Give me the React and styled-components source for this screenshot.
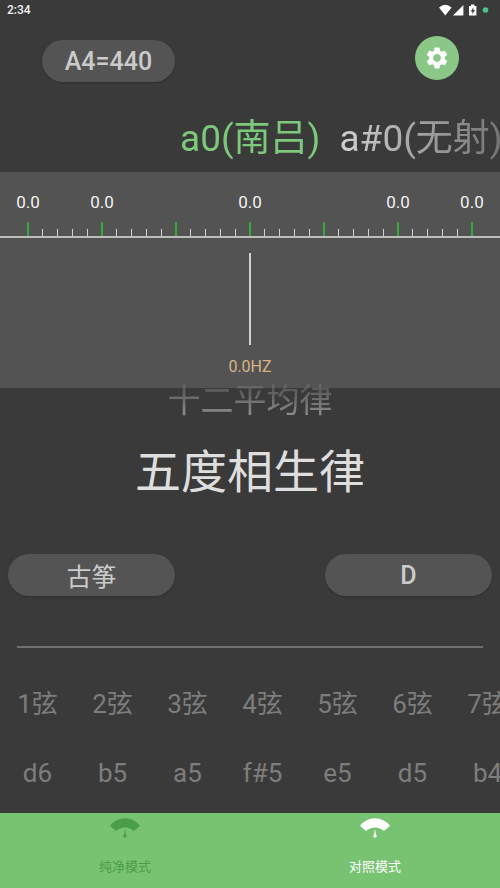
import { useState } from "react";
import styled, { createGlobalStyle } from "styled-components";
import { MdSettings } from "react-icons/md";

const GlobalStyle = createGlobalStyle`
  * {
    box-sizing: border-box;
  }
  body {
    margin: 0;
    background: #3a3a3a;
    font-family: Roboto, "Noto Sans CJK SC", sans-serif;
  }
  button {
    padding: 0;
    border: none;
    background: none;
    font-family: inherit;
    cursor: pointer;
  }
`;

const Page = styled.div`
  display: flex;
  flex-direction: column;
  min-height: 100vh;
  overflow: hidden;
  color: #d0d0d0;
`;

const StatusBar = styled.div`
  display: flex;
  justify-content: space-between;
  align-items: center;
  height: 20px;
  padding: 0 11px 0 7px;
  font-size: 12px;
  font-weight: 500;
  color: #f0f0f0;
`;

const Header = styled.header`
  display: flex;
  justify-content: space-between;
  align-items: flex-start;
  padding: 16px 41px 0 42px;
`;

const Pill = styled.button`
  height: 42px;
  border-radius: 21px;
  background: #545454;
  font-size: 25px;
  font-weight: ${(props) => (props.$regular ? 400 : 500)};
  color: #cbcbcb;
  box-shadow: 0 1px 2px rgba(0, 0, 0, 0.2);
`;

const PitchButton = styled(Pill)`
  width: 133px;
  margin-top: 4px;
`;

const SettingButton = styled.button`
  display: flex;
  justify-content: center;
  align-items: center;
  width: 44px;
  height: 44px;
  border-radius: 50%;
  background: #8bc888;
  color: white;
`;

const NoteList = styled.div`
  display: flex;
  gap: 19px;
  height: 92px;
  padding: 34px 0 0 180px;
  margin-bottom: -1px;
  margin-top: -1px;
  overflow: hidden;
  mask-image: linear-gradient(to right, black 68%, rgba(0, 0, 0, 0.4));
`;

const Note = styled.button`
  flex: none;
  height: 48px;
  font-size: 37px;
  line-height: 48px;
  white-space: nowrap;
  color: ${(props) => (props.$active ? "#7cc97b" : "#d0d0d0")};
`;

const Gauge = styled.section`
  display: flex;
  flex-direction: column;
  align-items: center;
  height: 216px;
  background: #535353;
`;

const Scale = styled.div`
  display: flex;
  justify-content: space-between;
  align-items: flex-end;
  width: 100%;
  height: 66px;
  padding: 0 27px;
  border-bottom: 2px solid #bdbdbd;
`;

const TickBox = styled.div`
  display: flex;
  flex-direction: column;
  align-items: center;
  justify-content: flex-end;
  width: 2px;
`;

const TickLabel = styled.span`
  margin-bottom: 10px;
  font-size: 17px;
  line-height: 20px;
  color: #f2f2f2;
`;

const Tick = styled.i`
  width: ${(props) => (props.$major ? 2 : 1)}px;
  height: ${(props) => (props.$major ? 14 : 7)}px;
  background: ${(props) => (props.$major ? "#36ab3b" : "#d0d0d0")};
`;

const Needle = styled.div`
  width: 2px;
  height: 92px;
  margin-top: 15px;
  background: #d2d2d2;
`;

const Frequency = styled.div`
  margin-top: 12px;
  font-size: 16px;
  line-height: 20px;
  color: #d5b383;
`;

const Picker = styled.div`
  position: relative;
  display: flex;
  flex-direction: column;
  align-items: center;
  gap: 17px;
  margin-top: -11px;
`;

const Temperament = styled.button`
  font-size: ${(props) => (props.$active ? 46 : 33)}px;
  line-height: ${(props) => (props.$active ? 60 : 48)}px;
  color: ${(props) => (props.$active ? "#dedede" : "#919191")};
  mask-image: ${(props) =>
    props.$active ? "none" : "linear-gradient(rgba(0, 0, 0, 0.1), black 85%)"};
`;

const Selects = styled.div`
  display: flex;
  gap: 150px;
  padding: 52px 8px 0;
`;

const WidePill = styled(Pill)`
  flex: 1;
`;

const Divider = styled.hr`
  width: calc(100% - 34px);
  height: 2px;
  margin: 50px 17px 0;
  border: none;
  background: #6f6f6f;
`;

const Strings = styled.div`
  display: grid;
  grid-auto-flow: column;
  grid-auto-columns: 75px;
  padding: 36px 0 20px;
  overflow: hidden;
`;

const StringItem = styled.div`
  display: flex;
  flex-direction: column;
  align-items: center;
  gap: 29px;
  font-size: 26px;
  line-height: 40px;
  white-space: nowrap;
  color: #7d7d7d;
`;

const TabBar = styled.nav`
  display: flex;
  height: 75px;
  margin-top: auto;
  background: #78c371;
`;

const Tab = styled.button`
  display: flex;
  flex: 1;
  flex-direction: column;
  align-items: center;
  gap: 17px;
  padding-top: 5px;
  font-size: 13px;
  line-height: 20px;
  color: ${(props) => (props.$active ? "white" : "#4c9d49")};
`;

const StatusIcons = () => (
  <svg width="50" height="14" viewBox="0 0 50 14" aria-hidden="true">
    <path d="M0 4.4Q6.3 -.8 12.6 4.4L6.3 12.4Z" fill="white" />
    <path d="M24.4 2V12.4H14Z" fill="white" />
    <path
      d="M30 3h2V1.4h3.4V3h2v9.6H30ZM34.3 4.4l-2.6 4h1.7v2.8l2.5-4.1h-1.6Z"
      fill="white"
      fillRule="evenodd"
    />
    <circle cx="46.5" cy="7" r="2.8" fill="#4cc38a" />
  </svg>
);

const DialIcon = () => (
  <svg width="30" height="22" viewBox="0 0 30 22" aria-hidden="true">
    <path
      d="M0 7.8Q6 .2 15 .2T30 7.8L24 13Q20 9.4 15 9.4T6 13Z"
      fill="currentColor"
    />
    <path d="M14.7 12h.6l.5 5h-1.6Z" fill="currentColor" />
    <circle cx="15" cy="18" r="1.8" fill="currentColor" />
  </svg>
);

const notes = ["a0(南吕)", "a#0(无射)"];
const labelTicks = [0, 5, 15, 25, 30];
const strings = ["d6", "b5", "a5", "f#5", "e5", "d5", "b4"];

const App = () => {
  const [tab, setTab] = useState("对照模式");

  return (
    <Page>
      <GlobalStyle />
      <StatusBar>
        <span>2:34</span>
        <StatusIcons />
      </StatusBar>

      <Header>
        <PitchButton>A4=440</PitchButton>
        <SettingButton aria-label="设置">
          <MdSettings size={26} />
        </SettingButton>
      </Header>

      <NoteList>
        {notes.map((note, i) => (
          <Note key={note} $active={i === 0}>
            {note}
          </Note>
        ))}
      </NoteList>

      <Gauge>
        <Scale>
          {Array.from({ length: 31 }, (_, i) => (
            <TickBox key={i}>
              {labelTicks.includes(i) && <TickLabel>0.0</TickLabel>}
              <Tick $major={i % 5 === 0} />
            </TickBox>
          ))}
        </Scale>
        <Needle />
        <Frequency>0.0HZ</Frequency>
      </Gauge>

      <Picker>
        <Temperament>十二平均律</Temperament>
        <Temperament $active>五度相生律</Temperament>
      </Picker>

      <Selects>
        <WidePill $regular>古筝</WidePill>
        <WidePill>D</WidePill>
      </Selects>

      <Divider />

      <Strings>
        {strings.map((pitch, i) => (
          <StringItem key={pitch}>
            <span>{i + 1}弦</span>
            <span>{pitch}</span>
          </StringItem>
        ))}
      </Strings>

      <TabBar>
        {["纯净模式", "对照模式"].map((name) => (
          <Tab key={name} $active={tab === name} onClick={() => setTab(name)}>
            <DialIcon />
            {name}
          </Tab>
        ))}
      </TabBar>
    </Page>
  );
};

export default App;
